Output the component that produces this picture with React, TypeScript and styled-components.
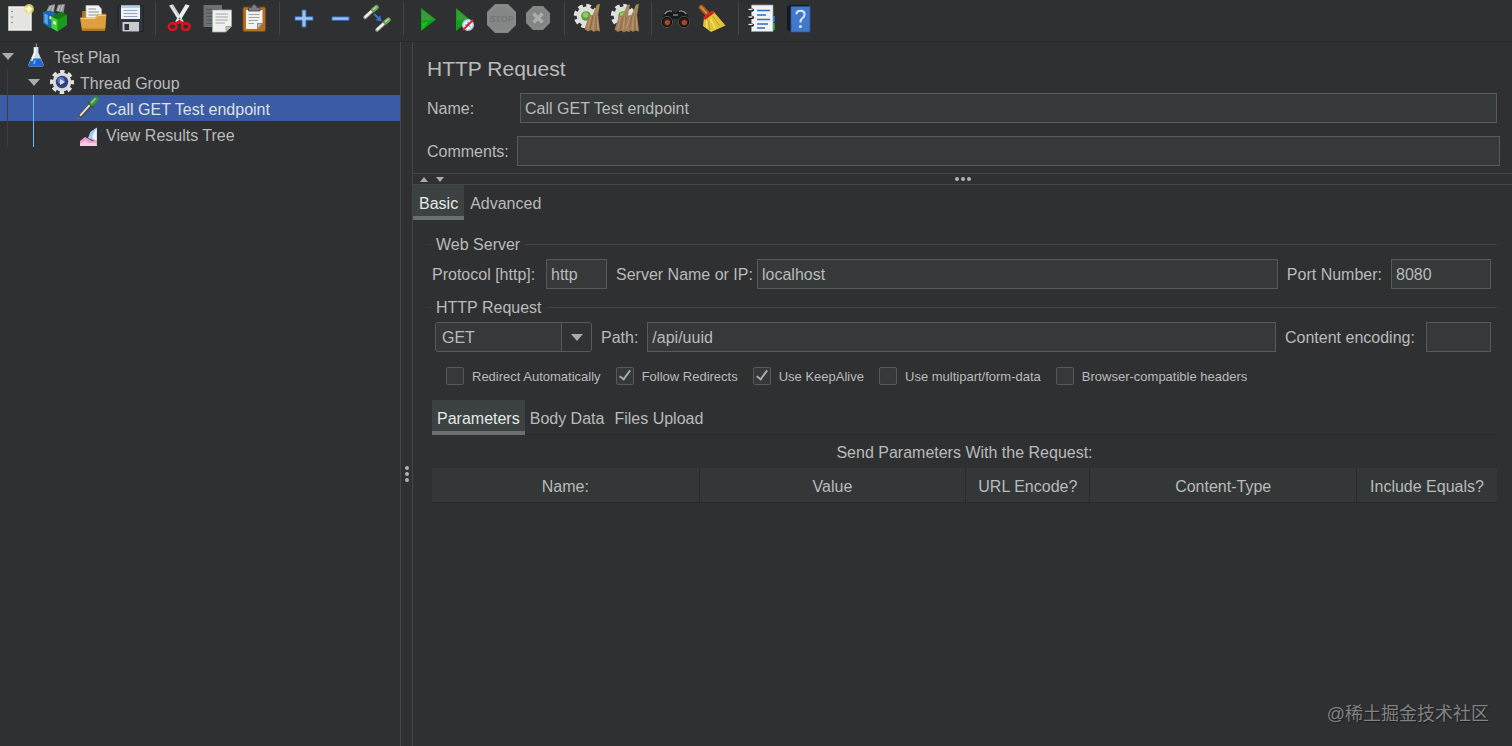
import React, { useState } from 'react';
import styled, { createGlobalStyle, css } from 'styled-components';

const c = {
  bg: '#2f3032',
  field: '#353939',
  border: '#565a5a',
  line: '#44474a',
  dark: '#282a2b',
  text: '#b9bbbc',
  bright: '#dfe1e2',
  blue: '#3b5ba5',
};

const GlobalStyle = createGlobalStyle`
  *, *::before, *::after { box-sizing: border-box; }
  body {
    margin: 0;
    background: ${c.bg};
    color: ${c.text};
    font: 16px/20px "Liberation Sans", Arial, sans-serif;
  }
  button, input, select { font: inherit; color: inherit; }
`;

const Window = styled.div`
  position: relative;
  display: flex;
  flex-direction: column;
  min-height: 100vh;
`;

const Toolbar = styled.header`
  display: flex;
  height: 42px;
  border-bottom: 1px solid ${c.dark};
`;

const ToolButton = styled.button`
  display: flex;
  align-items: center;
  justify-content: center;
  flex: none;
  width: 37px;
  height: 37px;
  padding: 0;
  border: 0;
  background: none;
`;

const Separator = styled.span`
  flex: none;
  width: 13px;
  height: 33px;
  margin-top: 2px;
  padding-left: 7px;

  &::before {
    content: '';
    display: block;
    width: 1px;
    height: 100%;
    background: #424547;
  }
`;

const ToolSvg = styled.svg`
  display: block;
  width: 29px;
  height: 29px;
  overflow: visible;
`;

const Body = styled.div`
  display: flex;
  flex: 1;
`;

const TreePane = styled.nav`
  flex: none;
  width: 401px;
  border-right: 1px solid ${c.line};
`;

const Tree = styled.ul`
  margin: 0;
  padding: 1px 0 0;
  list-style: none;
`;

const TreeRow = styled.li<{ $selected?: boolean }>`
  display: flex;
  align-items: center;
  height: 26px;
  white-space: nowrap;
  background: ${(p) => (p.$selected ? c.blue : 'transparent')};
  color: ${(p) => (p.$selected ? c.bright : c.text)};
`;

const TreeLabel = styled.span`
  padding-top: 3px;
`;

const Guide = styled.span<{ $active?: boolean }>`
  flex: none;
  align-self: stretch;
  width: 26px;
  padding-left: 7px;

  &::before {
    content: '';
    display: block;
    width: 1px;
    height: 100%;
    background: ${(p) => (p.$active ? '#6ab8f7' : '#3c3f42')};
  }
`;

const Twisty = styled.span`
  display: flex;
  justify-content: center;
  flex: none;
  width: 16px;
  margin-right: 6px;
`;

const TreeIcon = styled.svg`
  flex: none;
  width: 28px;
  height: 26px;
  margin-right: 4px;
  overflow: visible;
`;

const Arrow = styled.span<{ $up?: boolean; $large?: boolean }>`
  width: 0;
  height: 0;
  border: solid transparent;
  border-width: 0 ${(p) => (p.$large ? 6 : 4)}px;
  ${(p) =>
    p.$up
      ? css`border-bottom: 5px solid #a9abac;`
      : css`border-top: ${p.$large ? 7 : 5}px solid #a9abac;`}
`;

const Splitter = styled.div`
  display: flex;
  flex-direction: column;
  align-items: center;
  flex: none;
  gap: 2px;
  width: 11px;
  padding-top: 424px;
`;

const Dot = styled.i`
  width: 4px;
  height: 4px;
  border-radius: 2px;
  background: #b0b2b3;
`;

const Editor = styled.main`
  flex: 1;
  min-width: 0;
  border-left: 1px solid ${c.line};
`;

const Heading = styled.h1`
  margin: 0;
  padding: 14px 14px 11px;
  font-size: 21px;
  line-height: 26px;
  font-weight: 400;
`;

const FormRow = styled.div<{ $wide?: boolean }>`
  display: flex;
  align-items: center;
  padding: 0 ${(p) => (p.$wide ? 12 : 15)}px 0 14px;
  margin-bottom: ${(p) => (p.$wide ? 7 : 13)}px;
`;

const FormLabel = styled.label<{ $width?: number }>`
  flex: none;
  width: ${(p) => (p.$width ? `${p.$width}px` : 'auto')};
  padding-top: 2px;
`;

const Field = styled.input<{ $width?: number }>`
  ${(p) => (p.$width ? `flex: none; width: ${p.$width}px;` : 'flex: 1; width: 0;')}
  min-width: 0;
  height: 30px;
  padding: 2px 4px 0;
  border: 1px solid ${c.border};
  border-radius: 0;
  background: ${c.field};
  outline: 0;
`;

const SplitBar = styled.div`
  display: grid;
  grid-template-columns: 1fr auto 1fr;
  align-items: center;
  height: 12px;
  border: solid ${c.line};
  border-width: 1px 0;
`;

const Arrows = styled.div`
  display: flex;
  gap: 8px;
  padding-left: 7px;
`;

const Dots = styled.div`
  display: flex;
  gap: 2px;
`;

const TabStrip = styled.div<{ $ruled?: boolean }>`
  display: flex;
  height: 35px;
  box-shadow: ${(p) => (p.$ruled ? `inset 0 -1px ${c.dark}` : 'none')};
`;

const Tab = styled.button<{ $active?: boolean; $tight?: boolean }>`
  height: 35px;
  padding: 6px ${(p) => (p.$tight ? 5 : 6)}px 0;
  border: 0;
  border-bottom: 4px solid ${(p) => (p.$active ? '#6a706f' : 'transparent')};
  background: ${(p) => (p.$active ? '#3c4141' : 'none')};
  color: ${(p) => (p.$active ? '#e6e8e8' : c.text)};
`;

const Section = styled.fieldset`
  min-width: 0;
  margin: 0;
  padding: 0;
  border: 0;
`;

const Legend = styled.legend`
  display: flex;
  align-items: center;
  gap: 5px;
  width: 100%;
  height: 20px;
  padding: 0;
  white-space: nowrap;

  &::before, &::after {
    content: '';
    height: 1px;
    background: ${c.line};
  }
  &::before { width: 4px; background: #393b3d; }
  &::after { flex: 1; }

  span { padding-top: 2px; }
`;

const Panel = styled.div`
  padding: 14px 15px 0 14px;
`;

const FieldLine = styled.div`
  display: flex;
  align-items: center;
  gap: 9px;
  padding: 5px 6px 8px 5px;
  white-space: nowrap;
`;

const SelectBox = styled.div`
  position: relative;
  flex: none;
  width: 157px;
  height: 30px;
  margin-left: 3px;
`;

const Select = styled.select`
  appearance: none;
  width: 100%;
  height: 100%;
  padding: 2px 36px 0 6px;
  border: 1px solid ${c.border};
  border-radius: 3px;
  background: ${c.field};
  outline: 0;
`;

const SelectArrow = styled.span`
  position: absolute;
  inset: 1px 1px 1px auto;
  display: flex;
  align-items: center;
  justify-content: center;
  width: 30px;
  border-left: 1px solid ${c.border};
  border-radius: 0 2px 2px 0;
  background: #303334;
  pointer-events: none;
`;

const Checks = styled.div`
  display: flex;
  gap: 15px;
  padding: 7px 19px 15px;
  font-size: 13px;
  line-height: 18px;
  white-space: nowrap;

  span { padding-top: 2px; }
`;

const CheckLabel = styled.label`
  display: flex;
  align-items: center;
  height: 18px;
  gap: 8px;
`;

const CheckInput = styled.input`
  appearance: none;
  flex: none;
  width: 18px;
  height: 18px;
  margin: 0;
  border: 1px solid ${c.border};
  border-radius: 2px;
  background: ${c.field};

  &:checked::before {
    content: '';
    display: block;
    width: 6px;
    height: 12px;
    margin: 0 0 0 5px;
    border: solid #a5adac;
    border-width: 0 2px 2px 0;
    transform: rotate(36deg);
  }
`;

const Params = styled.div`
  padding-left: 5px;
`;

const ParamTable = styled.table`
  width: 100%;
  table-layout: fixed;
  border-collapse: separate;
  border-spacing: 0;

  caption { height: 33px; padding-top: 8px; }
`;

const HeadCell = styled.th<{ $width?: number }>`
  width: ${(p) => (p.$width ? `${p.$width}px` : 'auto')};
  height: 35px;
  padding: 4px 0 0;
  border-bottom: 1px solid ${c.dark};
  background: #333738;
  font-weight: 400;

  & + & { border-left: 1px solid ${c.dark}; }
`;

const Watermark = styled.div`
  position: absolute;
  right: 23px;
  bottom: 21px;
  color: #808284;
  font: 18px/22px "Liberation Sans", "Noto Sans CJK SC", sans-serif;
  text-shadow: 1px 1px 1px #1c1d1e;
`;

const octagon = (x: number, s: number, y = x) => {
  const a = Math.round(s * 0.29);
  const b = s - a;
  return `M${x + a} ${y}H${x + b}L${x + s} ${y + a}V${y + b}L${x + b} ${y + s}H${x + a}L${x} ${y + b}V${y + a}Z`;
};

const Pipette = () => (
  <g strokeLinecap="round">
    <path d="M1.6 12.4 9 5.6" stroke="#8b8f84" strokeWidth="4" />
    <path d="M1.8 11.8 8.6 5.6" stroke="#f1f1ea" strokeWidth="2.4" />
    <path d="M7.4 3.6 10.8 7" stroke="#3f4a36" strokeWidth="1.6" />
    <path d="M10 4.8 13 2.2" stroke="#6ea35a" strokeWidth="4.6" />
    <path d="M10 4.2 12.6 2" stroke="#b2d69c" strokeWidth="1.6" />
  </g>
);

const Gear = () => (
  <g>
    <circle cx="12" cy="12" r="10.4" fill="none" stroke="#e4e4e2" strokeWidth="3.6" strokeDasharray="4.6 3.57" />
    <circle cx="12" cy="12" r="9.4" fill="#dededc" />
    <circle cx="12" cy="12" r="4.8" fill="#5f9a3d" />
    <circle cx="11.6" cy="11" r="2.8" fill="#8fce5b" />
  </g>
);

const Bristles = () => (
  <g>
    <path d="M18.5 11 23 0.6 26 0 24 11Z" fill="#a08a58" />
    <path d="M15 11.5 24 10 26 27.5 22 26.4 20 28 17 26 14 27.4 10.5 25Z" fill="#a37f5a" />
    <path d="M17 12.5 13.5 25M20.6 12 19 25.6M23 12 24 25.5" stroke="#bd9a70" strokeWidth="1" fill="none" />
    <path d="M18.8 12.5 16.2 25M22 12 22 26" stroke="#83623f" strokeWidth="0.7" fill="none" />
  </g>
);

const icons: Record<string, React.ReactNode> = {
  'New': (
    <>
      <path d="M4.5 2.5H27.5V26.5H4.5Z" fill="#efefed" stroke="#bcbcba" />
      <path d="M6 4H26V25H6Z" fill="#e4e4e2" />
      <g fill="#77777a"><circle cx="8" cy="7.5" r="0.8" /><circle cx="8" cy="13" r="0.8" /><circle cx="8" cy="18.5" r="0.8" /></g>
      <circle cx="25" cy="5" r="5" fill="#e9df72" opacity="0.8" />
      <path d="M25 0.5 26.3 3.7 29.5 5 26.3 6.3 25 9.5 23.7 6.3 20.5 5 23.7 3.7Z" fill="#fffbd0" />
    </>
  ),
  'Templates': (
    <>
      <path d="M5 8 8 1.5 14 0 13 8ZM15 7 17 0.8 24 0 22.5 9Z" fill="#8e9294" />
      <path d="M7 8 10 2M10.5 8 13 1.5M17 7 19 1.4M20 7 22 1" stroke="#c9cccd" strokeWidth="1" />
      <path d="M2 8 9 6.5 14.5 9V25.5L8 23.5 2 19Z" fill="#1b66b0" />
      <path d="M3.4 9.5 6.8 11V21L3.4 18.6Z" fill="#5aa7e6" />
      <path d="M8.5 12 12 13V16L8.5 15Z" fill="#d5e9f7" />
      <path d="M10.5 12.5 20 8 26 11V21L16.5 27.5 10.5 24Z" fill="#1b9a1e" />
      <path d="M10.5 12.5 16.5 15.5V27.5L10.5 24Z" fill="#49cf3d" />
      <path d="M10.5 12.5 20 8 26 11 16.5 15.5Z" fill="#0f7a14" />
      <path d="M12 16.5 15 18V21L12 19.5Z" fill="#d3f6c9" />
    </>
  ),
  'Open': (
    <>
      <path d="M4 7H12L14 9.5H27.5V24H4Z" fill="#a9711c" />
      <path d="M8 1.5H20.5L23.5 5V17H8Z" fill="#f4f4f2" stroke="#b3b3b0" strokeWidth="0.8" />
      <path d="M10.5 5H18M10.5 8H21M10.5 11H21" stroke="#8f9294" strokeWidth="1.2" />
      <path d="M2 13.5H17L19.5 10.5H28.5L27 26.5H4Z" fill="#dd9f40" />
      <path d="M3 14.5H17.4L20 11.5H27.5" stroke="#f7cd80" strokeWidth="1" fill="none" />
      <path d="M3.8 24.5H27.2L27 26.8H4Z" fill="#b97a1e" />
    </>
  ),
  'Save': (
    <>
      <path d="M3 3Q3 2 4 2H27Q28 2 28 3V27.5H5L3 25.5Z" fill="#33383e" stroke="#1a1c1f" strokeWidth="0.8" />
      <path d="M6 1.5H25V15H6Z" fill="#eef3f8" />
      <path d="M6 1.5H25V4H6Z" fill="#b7cde6" />
      <path d="M8.5 6.5H22.5M8.5 9.5H22.5M8.5 12.5H22.5" stroke="#8ba6c4" strokeWidth="1.1" />
      <path d="M7.5 18H24V27.5H7.5Z" fill="#c9cbcc" />
      <path d="M9.5 20H14V26H9.5Z" fill="#2e3236" />
    </>
  ),
  'Cut': (
    <>
      <path d="M4 1.4 8 0.2 18.8 17.4 15.4 19.4Z" fill="#c9ccce" />
      <path d="M24.6 1.4 20.6 0.2 10.2 17.4 13.6 19.4Z" fill="#edeeef" />
      <path d="M6 1.5 16 18" stroke="#f4f5f5" strokeWidth="1.1" />
      <circle cx="14.5" cy="14.6" r="1" fill="#666" />
      <g fill="none" stroke="#d8141a" strokeWidth="2.6">
        <ellipse cx="7.6" cy="22.6" rx="3.9" ry="3.4" />
        <ellipse cx="20.8" cy="22.6" rx="3.9" ry="3.4" />
        <path d="M10 20 14.4 17.2 18.6 20" />
      </g>
    </>
  ),
  'Copy': (
    <>
      <path d="M1.5 1H20V23H1.5Z" fill="#6d7072" />
      <path d="M4.5 5.5H17M4.5 9H17M4.5 12.5H14M4.5 16H10M4.5 19.5H10" stroke="#505355" strokeWidth="1" />
      <path d="M10.5 6H29.5V22.5L24 28H10.5Z" fill="#f0f0ee" stroke="#a8aaaa" strokeWidth="0.8" />
      <path d="M24 28V22.5H29.5Z" fill="#bfc1c1" stroke="#8e9090" strokeWidth="0.8" />
      <path d="M13.5 10H26M13.5 13H26M13.5 16H26M13.5 19H23" stroke="#a1a4a5" strokeWidth="1.2" />
    </>
  ),
  'Paste': (
    <>
      <rect x="4" y="3" width="22.5" height="24.5" rx="1.5" fill="#b36f22" stroke="#7b4710" strokeWidth="0.8" />
      <path d="M7 6H23.5V19.5L18.5 25H7Z" fill="#f2f2f0" />
      <path d="M18.5 25V19.5H23.5Z" fill="#b9bbbb" stroke="#77797a" strokeWidth="0.8" />
      <path d="M9.5 10.5H20.5M9.5 13.5H20.5M9.5 16.5H19M9.5 19.5H15" stroke="#a1a4a5" strokeWidth="1.2" />
      <path d="M9.5 3.5H12.5Q13 0.5 15.2 0.5Q17.5 0.5 18 3.5H21V7H9.5Z" fill="#7a7d7f" stroke="#3f4143" strokeWidth="0.8" />
    </>
  ),
  'Expand All': <path d="M13 6H17V12.7H24V16.3H17V23H13V16.3H6V12.7H13Z" fill="#9cc6f2" stroke="#2f66b4" strokeWidth="1" />,
  'Collapse All': <path d="M6 12.9H23V16.3H6Z" fill="#9cc6f2" stroke="#2f66b4" strokeWidth="1" />,
  'Toggle': (
    <>
      <g transform="translate(0.5 1)"><Pipette /></g>
      <g transform="translate(12.5 13.5)"><Pipette /></g>
      <path d="M11 10 15.6 14.2" stroke="#3d74d0" strokeWidth="2" />
      <path d="M18.6 17.4 12.8 16.2 17.2 11.4Z" fill="#3d74d0" />
    </>
  ),
  'Start': (
    <>
      <path d="M8 4 23 15.5 8 27Z" fill="#0da318" />
      <path d="M9 6 21 15.4 9 16.5Z" fill="#3f9a3e" />
      <path d="M9 19 16 17.5 9 25.4Z" fill="#14c01a" />
    </>
  ),
  'Start no pauses': (
    <>
      <path d="M6 4 20 15.5 6 27Z" fill="#0da318" />
      <path d="M7 6 18 15.4 7 16.5Z" fill="#3f9a3e" />
      <circle cx="18" cy="21" r="5.4" fill="#f3f4f6" stroke="#a9bfdd" strokeWidth="1.4" />
      <path d="M18 17.5V21H15M18 21 20.5 23" stroke="#4374b8" strokeWidth="1" fill="none" />
      <path d="M13 26 23 16" stroke="#d8202c" strokeWidth="1.8" />
    </>
  ),
  'Stop': (
    <>
      <path d={octagon(0, 29)} fill="#858686" />
      <path d={octagon(2, 25)} fill="none" stroke="#919292" strokeWidth="0.8" />
      <text x="14.5" y="18" textAnchor="middle" fontSize="9" fontWeight="700" fill="#747575">STOP</text>
    </>
  ),
  'Shutdown': (
    <>
      <path d={octagon(2, 24)} fill="#838484" />
      <path d={octagon(4, 20)} fill="none" stroke="#8f9090" strokeWidth="0.8" />
      <path d="M9.5 9.5 18.5 18.5M18.5 9.5 9.5 18.5" stroke="#acadad" strokeWidth="3.4" />
    </>
  ),
  'Clear': (<><Gear /><Bristles /></>),
  'Clear All': (
    <>
      <Gear />
      <g transform="translate(-7 0.5)"><Bristles /></g>
      <g transform="translate(2 0)"><Bristles /></g>
    </>
  ),
  'Search': (
    <>
      <path d="M4 8Q8 4 12 7L14.5 9 17 7Q21 4 25 8L29 17V20H18L16.5 15H12.5L11 20H0V17Z" fill="#18191a" />
      <path d="M3.6 10Q7 5.5 11 7.4M25.4 10Q22 5.5 18 7.4" stroke="#8d9091" strokeWidth="1.3" fill="none" />
      <path d="M12 11H17" stroke="#75787a" strokeWidth="1.6" />
      <g fill="#3a1e16" stroke="#090909" strokeWidth="1.8"><circle cx="6" cy="18" r="5" /><circle cx="23" cy="18" r="5" /></g>
      <g fill="none" stroke="#6d7072" strokeWidth="0.7"><circle cx="6" cy="18" r="5.6" /><circle cx="23" cy="18" r="5.6" /></g>
      <g fill="#a04c2e"><circle cx="6.4" cy="18.6" r="2.6" /><circle cx="23.4" cy="18.6" r="2.6" /></g>
    </>
  ),
  'Reset Search': (
    <>
      <path d="M3.5 3.5 10 10.5" stroke="#a5581d" strokeWidth="5.4" strokeLinecap="round" />
      <path d="M3 3 8.5 9" stroke="#dd8c43" strokeWidth="1.8" strokeLinecap="round" />
      <path d="M6 14 15.5 7.5 27.5 21.5 13 28 5 22Z" fill="#e2c537" />
      <path d="M9.5 15 12 26M14.5 12 22 22" stroke="#b8961f" strokeWidth="0.8" />
      <path d="M8.5 16 9 24M12.5 15 17.5 25" stroke="#f2e27c" strokeWidth="1.3" />
      <path d="M6 14.6 15.2 7.6" stroke="#cf2418" strokeWidth="3.4" />
    </>
  ),
  'Function Helper': (
    <>
      <path d="M22 12H27V18H22Z" fill="#2f6fc6" />
      <path d="M22 19H27V26H22Z" fill="#1fa32b" />
      <path d="M3.5 1H25V27.5H3.5Z" fill="#f2f3f4" stroke="#96999b" strokeWidth="0.8" />
      <path d="M9 6.5H22M9 11H18M9 15.5H22M9 20H20M9 24H17" stroke="#2f6fc6" strokeWidth="1.5" />
      <g stroke="#0f1011" strokeWidth="3.2" strokeLinecap="round"><path d="M1.8 6H4.4M1.8 13.4H4.4M1.8 21H4.4" /></g>
      <g stroke="#dfe1e2" strokeWidth="1.5" strokeLinecap="round"><path d="M1 5.6H4M1 13H4M1 20.6H4" /></g>
    </>
  ),
  'Help': (
    <>
      <path d="M2 2.5 5 1H24V3L6 4V27.5L2 26Z" fill="#15181c" />
      <path d="M6 2.5H25V28H6Z" fill="#4178cb" stroke="#2a57a0" strokeWidth="0.8" />
      <path d="M11.4 10.2Q11.6 6.8 15.5 6.8Q19.6 6.8 19.6 10.3Q19.6 12.6 17.3 14.3Q15.4 15.8 15.4 18.4" stroke="#dbe7f7" strokeWidth="2" fill="none" />
      <circle cx="15.4" cy="22.6" r="1.5" fill="#dbe7f7" />
    </>
  ),
};

const groups = [
  ['New', 'Templates', 'Open', 'Save'],
  ['Cut', 'Copy', 'Paste'],
  ['Expand All', 'Collapse All', 'Toggle'],
  ['Start', 'Start no pauses', 'Stop', 'Shutdown'],
  ['Clear', 'Clear All'],
  ['Search', 'Reset Search'],
  ['Function Helper', 'Help'],
];

const flask = (
  <>
    <path d="M14.4 0.5V5" stroke="#8f9294" strokeWidth="1.2" />
    <path d="M11.6 4H16.4V9.5L21.4 21Q22 23.6 19.6 23.6H8.4Q6 23.6 6.6 21L11.6 9.5Z" fill="#cfdcea" />
    <path d="M9.4 15.5H18.6L21.2 21.2Q21.6 23.4 19.6 23.4H8.4Q6.4 23.4 6.8 21.2Z" fill="#1f68cf" />
    <path d="M13 5V10L9.6 18" stroke="#fff" strokeWidth="1.4" fill="none" />
    <path d="M13 17 12 21" stroke="#7db4f2" strokeWidth="1.6" />
  </>
);

const threads = (
  <>
    <circle cx="14" cy="13" r="10.2" fill="none" stroke="#e3e3e2" strokeWidth="3.6" strokeDasharray="4.4 3.61" strokeDashoffset="2.2" />
    <circle cx="14" cy="13" r="9.4" fill="#dadad9" />
    <circle cx="14" cy="13" r="6.2" fill="#2d427e" />
    <circle cx="13" cy="11.5" r="3.6" fill="#5c77b8" />
    <path d="M12 10 17 13 12 16Z" fill="#d5dff3" />
  </>
);

const dropper = (
  <g strokeLinecap="round">
    <path d="M4 23.4 7 20.6" stroke="#8a6f45" strokeWidth="1.4" />
    <path d="M6.6 20.8 16 10.4" stroke="#4b4d4a" strokeWidth="4.4" />
    <path d="M6.6 20.2 15.4 10.4" stroke="#deded4" strokeWidth="2" />
    <path d="M14.2 7.6 19 12" stroke="#2d5c26" strokeWidth="2" />
    <path d="M18 8.4 22 4" stroke="#3f8f35" strokeWidth="5.2" />
    <path d="M17.6 7.6 21 3.8" stroke="#8fce78" strokeWidth="1.8" />
  </g>
);

const results = (
  <>
    <path d="M14 17 16.4 11 22.6 6.6V21Z" fill="#a9c8f3" />
    <path d="M18 16 22.8 6.6V21Z" fill="#f1f6fd" />
    <path d="M6 20 11 16 14 17.6 18 20 22.8 19V25H6Z" fill="#f19ccb" />
    <path d="M6 23 11 19.6 15 22 22.8 21.6V25H6Z" fill="#fbcbe6" />
  </>
);

const nodes = [
  { name: 'Test Plan', depth: 0, open: true, icon: flask },
  { name: 'Thread Group', depth: 1, open: true, icon: threads },
  { name: 'Call GET Test endpoint', depth: 2, selected: true, icon: dropper },
  { name: 'View Results Tree', depth: 2, icon: results },
];

const options: [string, boolean][] = [
  ['Redirect Automatically', false],
  ['Follow Redirects', true],
  ['Use KeepAlive', true],
  ['Use multipart/form-data', false],
  ['Browser-compatible headers', false],
];

const columns: { title: string; width?: number }[] = [
  { title: 'Name:' },
  { title: 'Value' },
  { title: 'URL Encode?', width: 124 },
  { title: 'Content-Type' },
  { title: 'Include Equals?', width: 141 },
];

function Tabs({ names, ruled }: { names: string[]; ruled?: boolean }) {
  const [active, setActive] = useState(names[0]);
  return (
    <TabStrip role="tablist" $ruled={ruled}>
      {names.map((n) => (
        <Tab
          key={n}
          role="tab"
          aria-selected={n === active}
          $active={n === active}
          $tight={ruled}
          onClick={() => setActive(n)}
        >
          {n}
        </Tab>
      ))}
    </TabStrip>
  );
}

export default function App() {
  return (
    <Window>
      <GlobalStyle />
      <Toolbar>
        {groups.map((group, i) => (
          <React.Fragment key={group[0]}>
            {i > 0 && <Separator />}
            {group.map((name) => (
              <ToolButton key={name} aria-label={name}>
                <ToolSvg viewBox="0 0 29 29" fill="none">{icons[name]}</ToolSvg>
              </ToolButton>
            ))}
          </React.Fragment>
        ))}
      </Toolbar>
      <Body>
        <TreePane aria-label="Test plan tree">
          <Tree role="tree">
            {nodes.map((n) => (
              <TreeRow key={n.name} role="treeitem" aria-selected={!!n.selected} $selected={n.selected}>
                {Array.from({ length: n.depth }, (_, i) => <Guide key={i} $active={i === 1} />)}
                <Twisty>{n.open && <Arrow $large />}</Twisty>
                <TreeIcon viewBox="0 0 28 26" fill="none">{n.icon}</TreeIcon>
                <TreeLabel>{n.name}</TreeLabel>
              </TreeRow>
            ))}
          </Tree>
        </TreePane>
        <Splitter><Dot /><Dot /><Dot /></Splitter>
        <Editor>
          <Heading>HTTP Request</Heading>
          <FormRow>
            <FormLabel htmlFor="name" $width={93}>Name:</FormLabel>
            <Field id="name" defaultValue="Call GET Test endpoint" />
          </FormRow>
          <FormRow $wide>
            <FormLabel htmlFor="comments" $width={90}>Comments:</FormLabel>
            <Field id="comments" />
          </FormRow>
          <SplitBar>
            <Arrows><Arrow $up /><Arrow /></Arrows>
            <Dots><Dot /><Dot /><Dot /></Dots>
          </SplitBar>
          <Tabs names={['Basic', 'Advanced']} />
          <Panel>
            <Section>
              <Legend><span>Web Server</span></Legend>
              <FieldLine>
                <FormLabel htmlFor="protocol" $width={105}>Protocol [http]:</FormLabel>
                <Field id="protocol" $width={61} defaultValue="http" />
                <FormLabel htmlFor="server" $width={132}>Server Name or IP:</FormLabel>
                <Field id="server" defaultValue="localhost" />
                <FormLabel htmlFor="port">Port Number:</FormLabel>
                <Field id="port" $width={100} defaultValue="8080" />
              </FieldLine>
            </Section>
            <Section>
              <Legend><span>HTTP Request</span></Legend>
              <FieldLine>
                <SelectBox>
                  <Select aria-label="Method" defaultValue="GET">
                    <option>GET</option>
                    <option>POST</option>
                    <option>PUT</option>
                    <option>DELETE</option>
                  </Select>
                  <SelectArrow><Arrow $large /></SelectArrow>
                </SelectBox>
                <FormLabel htmlFor="path">Path:</FormLabel>
                <Field id="path" defaultValue="/api/uuid" />
                <FormLabel htmlFor="encoding" $width={132}>Content encoding:</FormLabel>
                <Field id="encoding" $width={65} />
              </FieldLine>
              <Checks>
                {options.map(([name, on]) => (
                  <CheckLabel key={name}>
                    <CheckInput type="checkbox" defaultChecked={on} />
                    <span>{name}</span>
                  </CheckLabel>
                ))}
              </Checks>
            </Section>
            <Params>
              <Tabs ruled names={['Parameters', 'Body Data', 'Files Upload']} />
              <ParamTable>
                <caption>Send Parameters With the Request:</caption>
                <thead>
                  <tr>
                    {columns.map((col) => (
                      <HeadCell key={col.title} scope="col" $width={col.width}>{col.title}</HeadCell>
                    ))}
                  </tr>
                </thead>
              </ParamTable>
            </Params>
          </Panel>
        </Editor>
      </Body>
      <Watermark>@稀土掘金技术社区</Watermark>
    </Window>
  );
}
